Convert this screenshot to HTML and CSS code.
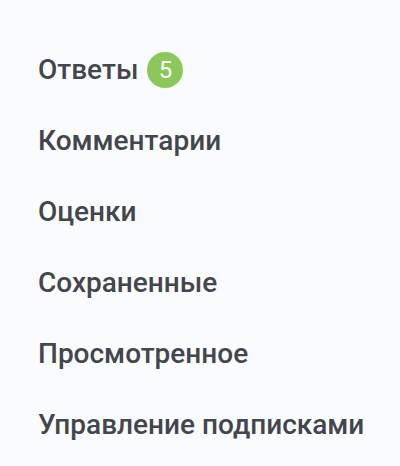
FILE: index.html
```html
<!DOCTYPE html>
<html lang="ru">
<head>
<meta charset="utf-8">
<link rel="stylesheet" href="styles.css">
</head>
<body>
<nav class="menu">
  <a class="item" href="#">Ответы <span class="badge">5</span></a>
  <a class="item" href="#">Комментарии</a>
  <a class="item" href="#">Оценки</a>
  <a class="item" href="#">Сохраненные</a>
  <a class="item" href="#">Просмотренное</a>
  <a class="item" href="#">Управление подписками</a>
</nav>
</body>
</html>
```
FILE: styles.css
```css
html, body {
  margin: 0;
  padding: 0;
  background: #fafbfd;
  width: 400px;
  height: 466px;
  overflow: hidden;
}
.menu {
  display: flex;
  flex-direction: column;
  padding: 34px 0 0 38px;
}
.item {
  display: flex;
  align-items: center;
  gap: 9px;
  height: 71px;
  font-family: Roboto, "Noto Sans", sans-serif;
  font-weight: 500;
  font-size: 28px;
  color: #43464d;
  text-decoration: none;
}
.badge {
  display: inline-flex;
  align-items: center;
  justify-content: center;
  width: 36px;
  height: 36px;
  border-radius: 50%;
  background: #8bc75a;
  color: #fff;
  font-weight: 400;
  font-size: 24px;
}
```
